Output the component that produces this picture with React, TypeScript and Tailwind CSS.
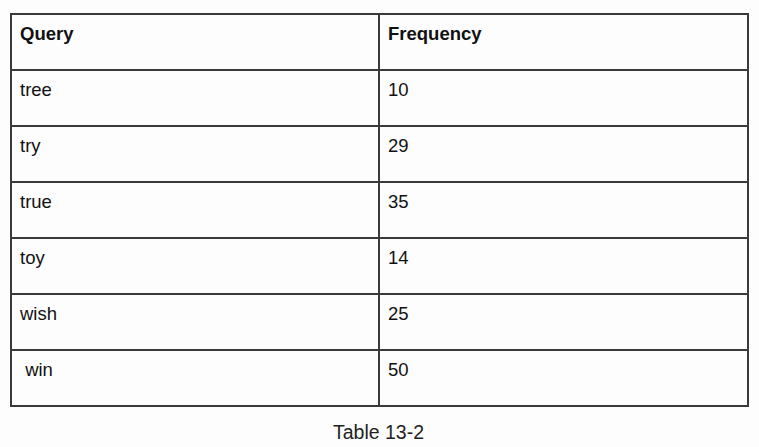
const rows = [
  { query: 'tree', frequency: '10' },
  { query: 'try', frequency: '29' },
  { query: 'true', frequency: '35' },
  { query: 'toy', frequency: '14' },
  { query: 'wish', frequency: '25' },
  { query: '\u00a0win', frequency: '50' },
];

const App = () => {
  return (
    <div className="w-[759px] h-[447px] bg-[#fdfdfd] text-[#111] font-['Liberation_Sans',Arial,sans-serif] pt-[13px] pl-[10px]">
      <table className="w-[737px] border-collapse table-fixed">
        <colgroup>
          <col className="w-[368px]" />
          <col className="w-[369px]" />
        </colgroup>
        <thead>
          <tr className="h-[56px]">
            <th className="border-2 border-[#3a3a3a] align-top text-left font-bold text-[18.5px] leading-[20px] pt-[9px] px-[8px]">
              Query
            </th>
            <th className="border-2 border-[#3a3a3a] align-top text-left font-bold text-[18.5px] leading-[20px] pt-[9px] px-[8px]">
              Frequency
            </th>
          </tr>
        </thead>
        <tbody>
          {rows.map((row) => (
            <tr key={row.query} className="h-[56px]">
              <td className="border-2 border-[#3a3a3a] align-top text-[18.5px] leading-[20px] pt-[9px] px-[8px]">
                {row.query}
              </td>
              <td className="border-2 border-[#3a3a3a] align-top text-[18.5px] leading-[20px] pt-[9px] px-[8px]">
                {row.frequency}
              </td>
            </tr>
          ))}
        </tbody>
      </table>
      <p className="w-[737px] text-center text-[19.5px] leading-[22px] mt-[14px] text-[#222]">
        Table 13-2
      </p>
    </div>
  );
};

export default App;
